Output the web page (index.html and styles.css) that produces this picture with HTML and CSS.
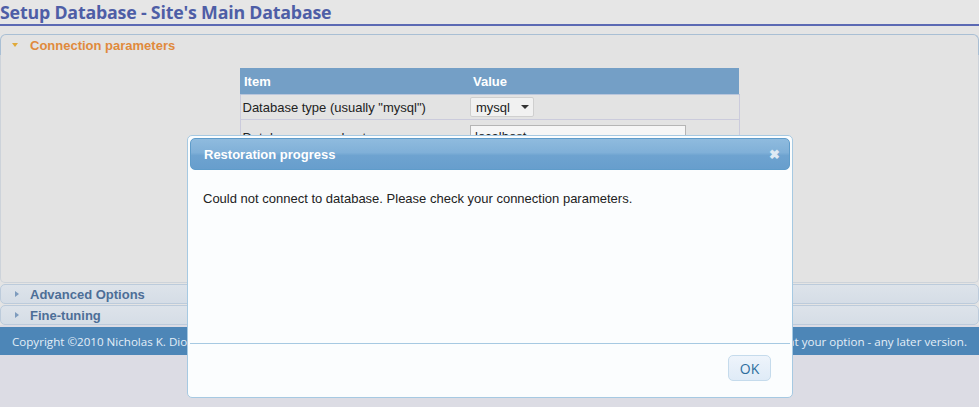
FILE: index.html
```html
<!DOCTYPE html>
<html>
<head>
<meta charset="utf-8">
<link rel="stylesheet" href="styles.css">
</head>
<body>
<h1 class="page-title">Setup Database - Site's Main Database</h1>

<div class="accordion">
  <div class="acc-head acc-open">
    <span class="tri tri-down"></span>
    <span class="acc-label">Connection parameters</span>
  </div>
  <div class="acc-body">
    <table class="params">
      <thead>
        <tr><th class="col-item">Item</th><th>Value</th></tr>
      </thead>
      <tbody>
        <tr>
          <td>Database type (usually "mysql")</td>
          <td><span class="select">mysql <span class="sel-arrow"></span></span></td>
        </tr>
        <tr class="row-cut">
          <td><span class="cut-text">Database server host</span></td>
          <td><span class="input">localhost</span></td>
        </tr>
      </tbody>
    </table>
  </div>
  <div class="acc-head acc-closed">
    <span class="tri tri-right"></span>
    <span class="acc-label">Advanced Options</span>
  </div>
  <div class="acc-head acc-closed">
    <span class="tri tri-right"></span>
    <span class="acc-label">Fine-tuning</span>
  </div>
</div>

<div class="footer">
  <span>Copyright ©2010 Nicholas K. Dionysopoulos</span>
  <span>at your option - any later version.</span>
</div>

<div class="dialog">
  <div class="dlg-title">
    <span>Restoration progress</span>
    <span class="dlg-close">✖</span>
  </div>
  <div class="dlg-content">Could not connect to database. Please check your connection parameters.</div>
  <div class="dlg-buttons">
    <button class="dlg-btn">OK</button>
  </div>
</div>
</body>
</html>
```

FILE: styles.css
```css
html, body {
  margin: 0;
  padding: 0;
}
body {
  background: #dcdce4;
  font-family: "Liberation Sans", Arial, sans-serif;
  width: 979px;
  height: 407px;
  overflow: hidden;
  position: relative;
}
.page-title {
  margin: 0;
  font-family: "Open Sans", sans-serif;
  font-weight: 700;
  font-size: 17.8px;
  line-height: 24px;
  height: 24px;
  color: #4e5ea6;
  border-bottom: 2px solid #5b69b3;
  background: #e6e6e6;
  letter-spacing: -0.2px;
}
.accordion {
  background: #e4e4e4;
  padding-top: 8px;
}
.acc-head {
  display: flex;
  align-items: center;
  font-size: 13px;
  font-weight: 700;
}
.acc-open {
  height: 20px;
  border: 1px solid #a9bfd4;
  border-bottom: none;
  border-radius: 6px 6px 0 0;
  background: #e3e3e3;
  color: #e08a3c;
}
.acc-closed {
  height: 18px;
  border: 1px solid #bccbdb;
  border-radius: 5px;
  background: linear-gradient(#dde3ea, #d5dde6);
  color: #4d6e97;
  margin-top: 1px;
}
.tri {
  width: 0;
  height: 0;
}
.tri-down {
  margin-left: 11px;
  border-left: 3px solid transparent;
  border-right: 3px solid transparent;
  border-top: 4px solid #e0a93a;
  margin-right: 12px;
}
.tri-right {
  margin-left: 14px;
  border-top: 3px solid transparent;
  border-bottom: 3px solid transparent;
  border-left: 4px solid #7d9bbd;
  margin-right: 11px;
}
.acc-body {
  overflow: hidden;
  background: #e3e3e3;
  border: 1px solid #cdd3da;
  border-top: none;
  border-radius: 0 0 5px 5px;
  padding-top: 13px;
  box-sizing: border-box;
  height: 228px;
}
.params {
  width: 500px;
  margin: 0 auto;
  border-collapse: collapse;
  font-size: 13px;
  color: #222;
}
.params th {
  background: #749fc6;
  color: #fff;
  font-weight: 700;
  text-align: left;
  height: 26px;
  padding: 0 4px;
  border: none;
  border-bottom: 1px solid #b9c6dc;
}
.params th.col-item {
  width: 221px;
}
.params td {
  height: 24px;
  padding: 0 2px;
  border-bottom: 1px solid #cbcbdc;
}
.params td:first-child {
  border-left: 1px solid #cbcbdc;
}
.params td:last-child {
  border-right: 1px solid #cbcbdc;
  padding-left: 1px;
}
.row-cut td {
  padding-top: 5px;
  vertical-align: top;
}
.cut-text {
  display: inline-block;
  padding-top: 5px;
}
.select {
  display: inline-flex;
  align-items: center;
  box-sizing: border-box;
  width: 64px;
  height: 20px;
  border: 1px solid #cfcfcf;
  border-radius: 2px;
  background: #f1f1f1;
  padding-left: 5px;
  font-size: 13px;
  vertical-align: middle;
}
.sel-arrow {
  margin-left: 11px;
  width: 0;
  height: 0;
  border-left: 4px solid transparent;
  border-right: 4px solid transparent;
  border-top: 4px solid #333;
}
.input {
  display: inline-block;
  box-sizing: border-box;
  width: 216px;
  height: 20px;
  border: 1px solid #b5b5b5;
  background: #f6f6f6;
  padding-left: 4px;
  padding-top: 2px;
  line-height: 18px;
}
.footer {
  margin-top: 2px;
  height: 28px;
  background: #4d86b7;
  color: #e3eef7;
  font-family: "Open Sans", sans-serif;
  font-size: 11.6px;
  display: flex;
  align-items: center;
  justify-content: space-between;
  padding: 0 12px;
  white-space: nowrap;
  overflow: hidden;
}

/* dialog overlays page */
.dialog {
  position: absolute;
  left: 187px;
  top: 135px;
  width: 606px;
  height: 263px;
  box-sizing: border-box;
  border: 1px solid #a6c9e2;
  border-radius: 5px;
  background: #fbfdfe;
  padding: 2px;
  display: flex;
  flex-direction: column;
}
.dlg-title {
  height: 32px;
  box-sizing: border-box;
  border: 1px solid #5f9cca;
  border-radius: 5px;
  background: linear-gradient(#8fbbde 0%, #80b0d8 45%, #6ea3d0 55%, #679ecd 100%);
  color: #fff;
  font-weight: 700;
  font-size: 13px;
  display: flex;
  align-items: center;
  justify-content: space-between;
  padding: 0 9px 0 13px;
}
.dlg-close {
  font-size: 13px;
  color: #dfeaf4;
}
.dlg-content {
  flex: 1;
  font-size: 13px;
  color: #222;
  padding: 21px 13px 0 13px;
}
.dlg-buttons {
  border-top: 1px solid #a6c9e2;
  height: 52px;
  display: flex;
  align-items: flex-start;
  justify-content: flex-end;
  padding: 11px 19px 0 0;
  box-sizing: border-box;
}
.dlg-btn {
  width: 43px;
  height: 26px;
  border: 1px solid #c5dbec;
  border-radius: 5px;
  background: linear-gradient(#eef4fb, #dfebf7);
  color: #2e6e9e;
  font-family: "Open Sans", sans-serif;
  font-size: 14px;
  padding: 0;
}
```
